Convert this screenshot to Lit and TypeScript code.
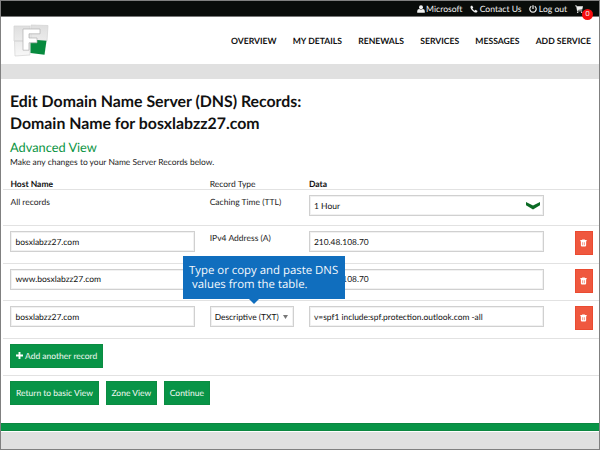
import { LitElement, html, css } from "lit";
import { customElement } from "lit/decorators.js";

const trash = html`<svg class="trash" viewBox="0 0 8 9"><path d="M2.4 1.2V.5h3.2v.7H7.6v1.3H7V7.4Q7 8.6 5.8 8.6H2.2Q1 8.6 1 7.4V2.5H.4V1.2z" fill="#fff"/><path d="M3 3.6v3.4M5 3.6v3.4" stroke="#ec5840" stroke-width=".7"/></svg>`;

const records = [
  { host: "bosxlabzz27.com", type: "IPv4 Address (A)", data: "210.48.108.70", select: false },
  { host: "www.bosxlabzz27.com", type: "", data: "210.48.108.70", select: false },
  { host: "bosxlabzz27.com", type: "Descriptive (TXT)", data: "v=spf1 include:spf.protection.outlook.com -all", select: true },
];

@customElement("app-root")
export class AppRoot extends LitElement {
  static styles = css`
    :host {
      display: block;
      width: 600px;
      height: 450px;
      box-sizing: border-box;
      border: 1px solid #808080;
      background: #fff;
      color: #1c1c1c;
      font: 8.5px/12px Lato, sans-serif;
      text-rendering: geometricPrecision;
      position: relative;
      overflow: hidden;
      white-space: nowrap;
    }
    * { box-sizing: border-box; }
    .page { display: flex; flex-direction: column; height: 448px; }
    .top {
      height: 15px;
      background: #090c0a;
      color: #f2f2f2;
      display: flex;
      justify-content: flex-end;
      align-items: center;
      padding-right: 16px;
      font-size: 8.6px;
      gap: 7.8px;
    }
    .link { display: flex; align-items: center; gap: 1.5px; }
    .top svg { width: 8px; height: 8px; fill: #f2f2f2; }
    .cart { position: relative; }
    .count {
      position: absolute;
      left: 7px;
      top: 4px;
      width: 11px;
      height: 11px;
      border-radius: 50%;
      background: #f80d0d;
      font: 7px/11px Lato, sans-serif;
      text-align: center;
    }
    .head {
      height: 48px;
      display: flex;
      justify-content: space-between;
      padding: 7px 8px 0 12px;
      border-top: 1px solid #777;
    }
    .logo { width: 36px; height: 34px; }
    nav { display: flex; gap: 16.2px; padding-top: 11px; font-weight: 700; font-size: 8.62px; color: #111; }
    .band { height: 15px; background: #e0e0e0; }
    .intro { height: 109px; padding: 12px 9px 0; }
    h1 { margin: 0; font-size: 15.85px; line-height: 22px; font-weight: 700; color: #111; }
    h2 { margin: 4px 0 0; font-size: 12.8px; line-height: 16px; font-weight: 400; color: #0a9443; }
    p { margin: 1px 0 0; line-height: 12px; font-size: 8.45px; }
    .row {
      margin-left: 2px;
      padding-left: 7.4px;
      display: grid;
      grid-template-columns: 199.3px 99.3px 235px 1fr;
      border-top: 1px solid #e2e2e2;
      box-shadow: 0 1px 0 #f6f6f6;
      height: 37.5px;
      padding-top: 5px;
      align-items: start;
    }
    .row.first { height: 36.3px; }
    .labels { border: 0; box-shadow: none; height: 15px; padding-top: 4px; margin-top: -14px; }
    .label { padding-top: 1px; }
    .row:last-of-type { box-shadow: none; }
    .box {
      height: 21px;
      border: 1px solid #d0d0d0;
      box-shadow: inset 0 0 0 1px #f1f1f1;
      background: #fff;
      padding: 0 5px 0 4px;
      display: flex;
      align-items: center;
      justify-content: space-between;
      color: #111;
    }
    .host { width: 185px; }
    .pick { width: 84px; font-size: 8.42px; }
    .data { font-size: 8.42px; }
    .chev { width: 14px; height: 9px; margin-right: -2px; }
    .tri { width: 5px; height: 4px; }
    .del {
      width: 18px;
      height: 24px;
      background: #ef583f;
      border: 1px solid #ea4b31;
      margin-left: 31px;
      display: flex;
      align-items: center;
      justify-content: center;
    }
    .trash { width: 7px; height: 8px; }
    .actions { display: flex; gap: 7px; }
    .btn {
      height: 24px;
      background: #089447;
      border: 1px solid #0b8c42;
      color: #f3faf5;
      display: flex;
      align-items: center;
      justify-content: center;
      gap: 1.5px;
    }
    .add { width: 93px; }
    .back { width: 89px; }
    .zone { width: 52px; }
    .next { width: 46px; }
    .btn svg { width: 7px; height: 7px; }
    .green { height: 8px; background: #089447; border: solid #0c8741; border-width: 1px 0; margin-top: auto; }
    .foot { height: 17px; margin-top: 1px; background: #e0e0e0; }
    .tip {
      position: absolute;
      left: 182px;
      top: 255px;
      width: 162px;
      height: 43px;
      background: #106ebe;
      color: #f4f8fc;
      font: 11.4px/14px "Open Sans", "Noto Sans", sans-serif;
      padding: 8px 0 0 6px;
    }
    .tip div + div { padding-left: 3px; }
    .tip::after {
      content: "";
      position: absolute;
      left: 66px;
      top: 43px;
      border: 5px solid transparent;
      border-top-color: #106ebe;
      border-bottom: 0;
    }
    .b { font-weight: 700; color: #111; }
  `;

  render() {
    return html`
      <section class="page">
        <div class="top">
          <span class="link"><svg viewBox="0 0 8 8"><circle cx="4" cy="2.2" r="2"/><path d="M.2 7.8V6Q.4 4 2.2 4q1.8 1 3.6 0Q7.6 4 7.8 6V7.8z"/></svg>Microsoft</span>
          <span class="link"><svg viewBox="0 0 8 8"><path d="M.6 1.2 2 .4 3.3 2.6 2.4 3.5Q3.2 5 4.6 5.7l.9-.9L7.6 6 7 7.3Q5.8 8 4 7 1.6 5.6.7 3.2.3 2 .6 1.2z"/></svg>Contact Us</span>
          <span class="link"><svg viewBox="0 0 8 8"><path d="M2.3 1.3A3.2 3.2 0 1 0 5.7 1.3M4 .2V4" fill="none" stroke="#f2f2f2" stroke-width="1.2"/></svg>Log out</span>
          <span class="link cart"><svg viewBox="0 0 8 8"><path d="M0 .4h1.7L2 1.2H8L7.3 4.5 2.7 5l.1.5h4.4v.8H2.1L1.2 1.2H0z"/><circle cx="2.7" cy="7.2" r=".75"/><circle cx="6.6" cy="7.2" r=".75"/></svg><span class="count">0</span></span>
        </div>
        <div class="head">
          <svg class="logo" viewBox="0 0 36 34">
            <defs><linearGradient id="g" x2="0" y2="1"><stop stop-color="#dedede"/><stop offset="1" stop-color="#f8f8f8"/></linearGradient></defs>
            <path d="M1 2h16v15H1zM18 1l17 .5L34 17 18 16zM1.5 17H17v14L2 32z" fill="url(#g)" stroke="#d2d2d2" stroke-width=".7"/>
            <path d="M17.500 15.500l16 1.200L31.500 30.800 17.500 29z" fill="#078a3e"/>
            <path d="M10 5h17v4.800H16v4.200h8v4.800h-8V26.200H10z" fill="#fff" stroke="#b0b0b0" stroke-width=".7" stroke-linejoin="round"/>
          </svg>
          <nav>${["OVERVIEW", "MY DETAILS", "RENEWALS", "SERVICES", "MESSAGES", "ADD SERVICE"].map((t) => html`<span>${t}</span>`)}</nav>
        </div>
        <div class="band"></div>
        <div class="intro">
          <h1>Edit Domain Name Server (DNS) Records:<br />Domain Name for bosxlabzz27.com</h1>
          <h2>Advanced View</h2>
          <p>Make any changes to your Name Server Records below.</p>
        </div>
        <div class="row labels"><span class="b">Host Name</span><span>Record Type</span><span class="b">Data</span></div>
        <div class="row first">
          <span class="label">All records</span><span class="label">Caching Time (TTL)</span>
          <div class="box">1 Hour<svg class="chev" viewBox="0 0 14 9"><path d="M0 1 7 4.5 14 1V4.2L7 8.5 0 4.2z" fill="#0b6b25"/></svg></div>
        </div>
        ${records.map((r) => html`<div class="row">
          <div class="box host">${r.host}</div>
          ${r.select
            ? html`<div class="box pick">${r.type}<svg class="tri" viewBox="0 0 5 4"><path d="M0 0h5L2.5 4z" fill="#777"/></svg></div>`
            : html`<span class="label">${r.type}</span>`}
          <div class="box data">${r.data}</div>
          <div class="del">${trash}</div>
        </div>`)}
        <div class="row"><div class="btn add"><svg viewBox="0 0 7 7"><path d="M3.5 0V7M0 3.5H7" stroke="#fff" stroke-width="1.9"/></svg>Add another record</div></div>
        <div class="row"><div class="actions"><div class="btn back">Return to basic View</div><div class="btn zone">Zone View</div><div class="btn next">Continue</div></div></div>
        <footer class="green"></footer>
        <footer class="foot"></footer>
      </section>
      <aside class="tip"><div>Type or copy and paste DNS</div><div>values from the table.</div></aside>
    `;
  }
}
